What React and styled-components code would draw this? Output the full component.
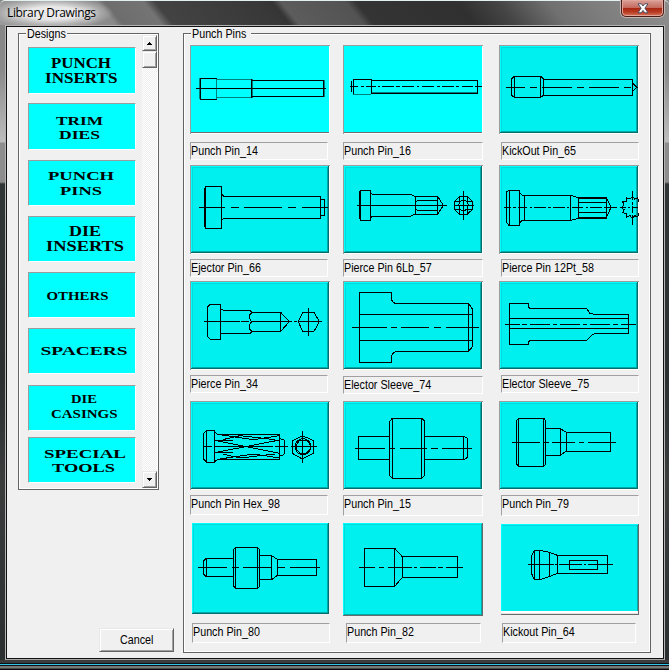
import React from "react";
import styled, { createGlobalStyle, css } from "styled-components";

const GlobalStyle = createGlobalStyle`
  * { box-sizing: border-box; }
  html, body { margin: 0; padding: 0; }
  body { width: 669px; height: 670px; overflow: hidden; background: #2b2f30; }
`;

const Window = styled.div`
  width: 669px;
  height: 670px;
  display: flex;
  flex-direction: column;
  overflow: hidden;
  font-family: "Liberation Sans", Arial, sans-serif;
  color: #000;
  background: linear-gradient(180deg, #858585 0, #8a8a8a 70px, #bdbdbd 142px, #8d8d8d 143px, #8d8d8d 182px, #303536 184px, #2b2f30 380px, #3b3d3d 480px, #2b2f30 660px);
`;

const TitleBar = styled.header`
  display: flex;
  justify-content: space-between;
  height: 25px;
  flex: none;
  border-top: 1px solid #e4efef;
  border-radius: 5px 5px 0 0;
  background:
    radial-gradient(ellipse 62px 16px at 52px 12px, rgba(235, 235, 235, 0.95) 40%, rgba(200, 200, 200, 0.55) 75%, rgba(150, 150, 150, 0) 100%),
    linear-gradient(51deg, #9a9a9a 0, #8a8a8a 90px, #6d6d6d 96px, #747474 126px, #434343 135px, #383838 215px, #353535 226px, #5c5c5c 233px, #535353 283px, #343434 291px, #303030 370px, #444 400px, #707070 440px, #7c7c7c 470px, #8b8b8b 520px);
`;

const Title = styled.h1`
  margin: 0;
  padding: 3px 0 0 7px;
  font: 400 12px/18px "Open Sans", "Noto Sans", sans-serif;
  letter-spacing: -0.36px;
  text-shadow: 0 0 6px #fff;
`;

const CloseButton = styled.button`
  width: 43px;
  height: 17px;
  margin: -1px 5px 0 0;
  padding: 0;
  display: flex;
  justify-content: center;
  align-items: center;
  border: 1px solid #4a1c18;
  border-top: 0;
  border-radius: 0 0 5px 5px;
  box-shadow: 0 0 0 1px #c4b4b0, inset 0 0 0 1px #e0a59a;
  background: linear-gradient(180deg, #d9a199 0, #c56a5d 48%, #a92712 52%, #b83a22 75%, #d8775c 100%);
`;

const Frame = styled.main`
  width: 660px;
  height: 635px;
  margin-left: 5px;
  flex: none;
  display: flex;
  background: #f0f0f0;
  border: 1px solid #b4b4b4;
  border-bottom-color: #a8a8a8;
  box-shadow: inset 0 0 0 1px #111;
`;

const BottomEdge = styled.footer`
  flex: 1;
  background: linear-gradient(180deg, #3b3b3b 0 3px, #0b1416 3px 4px, #32c4ea 4px 5px, #101010 5px 6px, #777 6px 8px, #4a4a4a 8px 9px, #080808 9px);
`;

const SideColumn = styled.div`
  width: 177px;
  padding: 7px 0 0 12px;
  display: flex;
  flex-direction: column;
`;

const Group = styled.section`
  position: relative;
  width: ${(p) => p.$w}px;
  height: ${(p) => p.$h}px;
  flex: none;
  display: flex;
  border: 1px solid #646464;
  box-shadow: inset 1px 1px 0 #fff, inset -1px -1px 0 #fff;
`;

const textFace = css`
  font-size: 12px;
  line-height: 14px;
  white-space: nowrap;
  transform: scaleX(0.895);
  transform-origin: 0 50%;
`;

/* Caption that sits on the group's top border. */
const GroupTitle = styled.div`
  position: absolute;
  left: 7px;
  top: -7px;
  width: ${(p) => p.$w}px;
  height: 14px;
  padding-left: 1px;
  background: #f0f0f0;
`;

const Face = styled.span`
  display: block;
  ${textFace}
`;

const DesignList = styled.div`
  width: 123px;
  padding: 13px 0 0 9px;
`;

const DesignButton = styled.button`
  display: block;
  width: 108px;
  height: ${(p) => p.$h}px;
  margin: 0 0 ${(p) => p.$gap}px;
  padding: 0;
  border: 1px solid;
  border-color: #9c9c9c #fff #fff #9c9c9c;
  background: #00ffff;
`;

const WordArt = styled.svg`
  display: block;
  margin: -1px;
  font-family: "Liberation Serif", "Times New Roman", serif;
  font-weight: 700;
`;

const ScrollBar = styled.div`
  width: 15px;
  margin-top: 1px;
  height: 453px;
  display: flex;
  flex-direction: column;
  background: repeating-conic-gradient(#fff 0 25%, #eee 0 50%) 0 0 / 2px 2px;
`;

const bevel = css`
  border: 1px solid;
  border-color: #e8e8e8 #646464 #646464 #e8e8e8;
  box-shadow: inset 1px 1px 0 #fff, inset -1px -1px 0 #a0a0a0;
  background: #f0f0f0;
`;

const ScrollPart = styled.button`
  ${bevel}
  display: flex;
  justify-content: center;
  align-items: center;
  flex: none;
  width: 15px;
  height: ${(p) => p.$h}px;
  margin-top: ${(p) => (p.$last ? "auto" : 0)};
  padding: 0;
`;

const CancelButton = styled.button`
  ${bevel}
  width: 75px;
  height: 24px;
  margin: 138px 0 0 81px;
  padding: 0 0 0 4px;
  display: flex;
  justify-content: center;
  align-items: center;
  color: #000;
  font-family: inherit;
`;

const PinArea = styled.div`
  padding-top: 7px;
`;

const PinColumn = styled.div`
  width: ${(p) => p.$w}px;
  padding: 11px 0 0 ${(p) => p.$left || 0}px;
`;

const shadows = {
  flat: "inset 1px 1px 0 #9c9c9c, inset -1px -1px 0 #fff, inset 0 -2px 0 #707070",
  raised:
    "inset 1px 1px 0 #9c9c9c, inset -1px -1px 0 #fff, inset -2px -2px 0 #006f6f, inset 2px 2px 0 #00ffff, inset -3px -3px 0 #00a8a8, inset 3px 3px 0 #00dcdc",
  bare:
    "inset -1px -1px 0 #006f6f, inset 1px 1px 0 #00ffff, inset -2px -2px 0 #00a8a8, inset 2px 2px 0 #00dcdc",
  framed:
    "inset -1px -1px 0 #6a6a6a, inset 1px 1px 0 #00ffff, inset -2px -2px 0 #00a8a8, inset 2px 2px 0 #00dcdc",
  lined:
    "inset -1px -1px 0 #6a6a6a, inset 0 -2px 0 #e4e4e4, inset 0 -4px 0 #fff, inset 1px 1px 0 #00ffff, inset -2px 0 0 #00a8a8, inset 0 2px 0 #00dcdc",
};

const PinPicture = styled.button`
  display: block;
  width: ${(p) => p.$w}px;
  height: ${(p) => p.$h}px;
  margin: ${(p) => p.$top}px 0 0 ${(p) => p.$left}px;
  padding: 0;
  border: 0;
  background: ${(p) => (p.$kind === "flat" ? "#00ffff" : "#00f0f0")};
  box-shadow: ${(p) => shadows[p.$kind]};
`;

const PinLabel = styled.div`
  width: ${(p) => p.$w}px;
  height: ${(p) => p.$h}px;
  margin: ${(p) => p.$top}px 0 0 ${(p) => p.$left}px;
  padding: 1px 0 0;
  border: 1px solid;
  border-color: #a0a0a0 #fff #fff #a0a0a0;
`;

const Drawing = styled.svg`
  display: block;
  fill: none;
  stroke: #000;
  stroke-width: 3;
  shape-rendering: crispEdges;
`;

/* Each line: text, left, right, baseline; in button pixels. */
const designs = [
  { h: 47, gap: 9, lines: [["PUNCH", 23, 83, 21.3], ["INSERTS", 17, 89.5, 36]] },
  { h: 47, gap: 10, size: 13, lines: [["TRIM", 28, 75, 22.3], ["DIES", 31, 72, 36]] },
  { h: 46, gap: 10, size: 13.2, lines: [["PUNCH", 20, 86, 20.3], ["PINS", 32, 74, 35.3]] },
  { h: 46, gap: 10, size: 14.2, lines: [["DIE", 41, 73, 20], ["INSERTS", 18, 96, 35.3]] },
  { h: 46, gap: 10, size: 12.6, lines: [["OTHERS", 18.5, 80.5, 28]] },
  { h: 46, gap: 11, size: 13, lines: [["SPACERS", 12.5, 99.5, 27.3]] },
  { h: 46, gap: 6, size: 13, lines: [["DIE", 43, 69, 18.3], ["CASINGS", 23, 89.5, 33.3]] },
  { h: 46, gap: 0, size: 12.6, lines: [["SPECIAL", 16, 98, 20.8], ["TOOLS", 24, 87, 34.9]] },
];

const star = (cx, cy, outer, inner, points) =>
  "M" +
  Array.from({ length: points * 2 }, (_, i) => {
    const r = i % 2 ? inner : outer;
    const a = (Math.PI * i) / points;
    return `${(cx + r * Math.cos(a)).toFixed(1)} ${(cy + r * Math.sin(a)).toFixed(1)}`;
  }).join("L") +
  "Z";

/* Drawings use three units to the pixel; "at" is the top left of the view. */
const columns = [
  {
    left: 6, w: 159,
    pins: [
      { name: "Punch Pin_14", kind: "flat", at: [30, 75], pic: [140, 89, 0, 0], label: [138, 18, 8, 0],
        soft: "M58 175V238M109 178H213M109 233H213M110 175V238M216 178V234M432 181V230",
        d: "M61 175H110M61 238H110M61 175V238M213 178V234M213 181H430V230H213M48 205H438" },
      { name: "Ejector Pin_66", kind: "raised", at: [30, 15], pic: [140, 89, 5, 0], label: [138, 18, 5, 0],
        d: "M76 79H124V205H76ZM73 84V200M125 84V200M124 97L127 105L132 109H422V175H130L124 183M422 118H434V166H422M57 142H135M153 142H177M192 142H306M324 142H348M366 142H444" },
      { name: "Pierce Pin_34", kind: "raised", at: [30, 363], pic: [140, 89, 4, 0], label: [138, 18, 5, 0],
        d: "M90 433H122V538H92L83 530V441ZM122 446L131 451H210L216 457H302V514H216L210 520H122M302 457L328 485L302 514M216 457L209 464V476L215 485L209 493V507L216 514M72 484H180M184 484H208M212 484H337M342 484H352M356 484H426M355 485L368 457H402L418 485L402 514H368ZM385 445V527" },
      { name: "Punch Pin Hex_98", kind: "raised", at: [30, 33], pic: [140, 89, 8, 0], label: [138, 20, 5, 0],
        d: "M80 121H104V217H80L71 208V130ZM80 121V217M104 126L113 133H299V208H113L104 215M104 152H160M104 188H160M104 151L299 190M104 188L299 150M113 133L220 149L299 137M113 208L220 192L299 204M128 149L180 137L285 149M128 192L180 204L285 192M299 146L314 151V190L308 196H299M299 133V208M70 169H96M104 169H280M285 169H323M367 137L401 152V190L367 207L337 190V152ZM367 123V219M333 169H411M345 170A24 24 0 1 0 393 170A24 24 0 1 0 345 170M350 163L360 150L378 150L390 163V178L378 190H360L350 178Z" },
      { name: "Punch Pin_80", kind: "bare", at: [36, 399], pic: [137, 91, 8, 2], label: [138, 20, 9, 2],
        d: "M78 506H161M161 559H78L70 552V513L78 506V559M167 472H233L238 479V590L233 595H167L161 589V479ZM167 472V595M233 472V595M239 497H275L292 508H410V556H292L275 569H239M275 497V569M292 508V556M54 532H141M156 532H177M190 532H276M292 532H315M330 532H420" },
    ],
  },
  {
    left: 0, w: 156,
    pins: [
      { name: "Punch Pin_16", kind: "flat", at: [24, 75], pic: [140, 89, 0, 0], label: [140, 18, 8, 0],
        soft: "M55 222H108M110 217H428",
        d: "M55 178H108V223M55 178V223M50 184V215M110 182H428V220H110ZM45 199H70M77 199H87M94 199H122M129 199H134M141 199H177M184 199H194M202 199H238M245 199H252M262 199H298M306 199H314M322 199H357M364 199H373M380 199H413M420 199H441" },
      { name: "Pierce Pin 6Lb_57", kind: "raised", at: [489, 15], pic: [140, 89, 5, 0], label: [140, 18, 5, 0],
        d: "M541 91H572V181H541ZM538 94V178M572 98L577 103H690L708 110M572 174L577 169H690L708 162M706 109H773V163H706M706 109V163M711 121H773M711 151H773M706 121L712 125M706 151L712 147M773 109L790 136L773 163M531 136H801M821 136H881M850 94V179M839 109H861L878 125V148L861 163H839L823 148V125ZM836 136L840 124L850 120L861 124L865 136L861 148L850 153L840 148ZM839 109V124H825M861 109V124H877M839 163V148H825M861 163V148H877" },
      { name: "Elector Sleeve_74", kind: "raised", at: [489, 363], pic: [140, 89, 4, 0], label: [140, 18, 6, 0],
        d: "M538 397H634V415Q636 430 650 430H866L877 447V560L866 574H652Q636 576 634 592V607H538ZM538 463H877M538 541H877M866 430V574M516 502H621M633 502H651M663 502H748M762 502H783M798 502H897" },
      { name: "Punch Pin_15", kind: "raised", at: [489, 33], pic: [140, 89, 7, 0], label: [140, 21, 5, 0],
        d: "M628 139H535V208H628M637 85H725L734 94V256L725 265H637L629 256V94ZM637 85V265M725 85V265M734 139H852L863 145V201L854 208H734M851 139V208M525 175H615M630 175H645M660 175H740M754 175H774M786 175H876" },
      { name: "Punch Pin_82", kind: "framed", at: [489, 399], pic: [140, 93, 7, 0], label: [135, 20, 7, 3],
        d: "M553 475H644V589H553ZM644 475L667 500H833V562H667L644 589M667 500V562M537 532H585M597 532H612M624 532H696M703 532H712M719 532H768M774 532H789M798 532H849" },
    ],
  },
  {
    left: 0, w: 150,
    pins: [
      { name: "KickOut Pin_65", kind: "raised", at: [27, 135], pic: [140, 89, 0, 0], label: [138, 18, 8, 2],
        d: "M73 229H152V292H73ZM73 229L65 236V286L73 292M152 229L160 236V286L152 292M160 238H428V286H160M428 250L441 262L428 274M48 262H105M120 262H141M156 262H246M261 262H282M297 262H387M402 262H423" },
      { name: "Pierce Pin 12Pt_58", kind: "raised", at: [237, 15], pic: [140, 89, 5, 0], label: [138, 18, 5, 2],
        d: "M267 91H299V196H267L260 188V96ZM267 91V196M299 98L307 106H452L475 113M299 188L307 181H452L475 175M313 106V181M452 106V181M475 112V175M475 112H558V175H475M475 115H558M475 172H558M475 127H558M475 157H558M558 112L573 142L558 175M252 142H273M280 142H287M294 142H322M329 142H336M343 142H378M385 142H392M399 142H434M441 142H448M455 142H490M497 142H504M511 142H546M553 142H591M600 142H618M624 142H630M635 142H654M637 93V120M637 127V135M637 139V160M637 166V194" + star(637, 142, 33, 26, 12) },
      { name: "Elector Sleeve_75", kind: "raised", at: [237, 363], pic: [140, 89, 4, 0], label: [138, 18, 5, 2],
        d: "M268 430H326V442L329 445H500L510 460L522 463H626V520H530Q515 523 510 532L500 541H330L326 545V553H268ZM268 475H626M268 505H626M255 493H300M306 493H321M330 493H390M399 493H411M420 493H480M489 493H501M510 493H570M579 493H594M603 493H648" },
      { name: "Punch Pin_79", kind: "raised", at: [237, 33], pic: [140, 89, 8, 0], label: [138, 21, 5, 2],
        d: "M295 85H372L377 92V223L372 229H295L290 222V92ZM295 85V229M371 85V229M377 115H421L432 123L439 127H572V184H439L432 188L421 196H377M421 115V196M439 127V184M276 157H360M372 157H387M397 157H465M477 157H492M504 157H588" },
      { name: "Kickout Pin_64", kind: "lined", at: [243, 402], pic: [138, 91, 8, 2], label: [134, 20, 8, 3],
        d: "M343 481H359Q390 486 412 496H563V550H412Q390 560 359 569H343L335 551V496ZM343 481V569M358 481V569M388 487V560M412 496V550M448 511H533V538H448ZM324 523H402M406 523H413M417 523H486M491 523H499M504 523H530M534 523H579" },
    ],
  },
];

function Design({ item }) {
  return (
    <DesignButton $h={item.h} $gap={item.gap}>
      <WordArt width="108" height={item.h} fontSize={item.size || 13.6}>
        {item.lines.map(([text, x1, x2, y]) => (
          <text key={text} x={x1} y={y} textLength={x2 - x1} lengthAdjust="spacingAndGlyphs">
            {text}
          </text>
        ))}
      </WordArt>
    </DesignButton>
  );
}

function Pin({ pin }) {
  const [w, h, top, left] = pin.pic;
  const [lw, lh, ltop, lleft] = pin.label;
  return (
    <>
      <PinPicture $w={w} $h={h} $top={top} $left={left} $kind={pin.kind} aria-label={pin.name}>
        <Drawing width={w} height={h} viewBox={`${pin.at[0]} ${pin.at[1]} ${w * 3} ${h * 3}`}>
          {pin.soft && <path d={pin.soft} stroke="#007f7f" />}
          <path d={pin.d} />
        </Drawing>
      </PinPicture>
      <PinLabel $w={lw} $h={lh} $top={ltop} $left={lleft}>
        <Face>{pin.name}</Face>
      </PinLabel>
    </>
  );
}

export default function App() {
  return (
    <>
      <GlobalStyle />
      <Window>
        <TitleBar>
          <Title>Library Drawings</Title>
          <CloseButton aria-label="Close">
            <svg width="12" height="11" viewBox="0 0 12 11">
              <path
                d="M1 .8H4.3L6 3L7.7 .8H11L7.9 5.2L11 9.8H7.7L6 7.4L4.3 9.8H1L4.1 5.2Z"
                fill="#fff"
                stroke="#4a4e62"
                strokeWidth="1"
              />
            </svg>
          </CloseButton>
        </TitleBar>
        <Frame>
          <SideColumn>
            <Group $w={141} $h={457}>
              <GroupTitle $w={41}>
                <Face>Designs</Face>
              </GroupTitle>
              <DesignList>
                {designs.map((item, i) => (
                  <Design key={i} item={item} />
                ))}
              </DesignList>
              <ScrollBar>
                <ScrollPart $h={16} aria-label="Scroll up">
                  <svg width="5" height="3" viewBox="0 0 5 3" shapeRendering="crispEdges">
                    <path d="M2 0H3V1H4V2H5V3H0V2H1V1H2Z" />
                  </svg>
                </ScrollPart>
                <ScrollPart $h={17} aria-label="Scroll position" />
                <ScrollPart $h={17} $last aria-label="Scroll down">
                  <svg width="5" height="3" viewBox="0 0 5 3" shapeRendering="crispEdges">
                    <path d="M0 0H5V1H4V2H3V3H2V2H1V1H0Z" />
                  </svg>
                </ScrollPart>
              </ScrollBar>
            </Group>
            <CancelButton>
              <Face>Cancel</Face>
            </CancelButton>
          </SideColumn>
          <PinArea>
            <Group $w={468} $h={620}>
              <GroupTitle $w={60}>
                <Face>Punch Pins</Face>
              </GroupTitle>
              {columns.map((col, i) => (
                <PinColumn key={i} $w={col.w} $left={col.left}>
                  {col.pins.map((pin) => (
                    <Pin key={pin.name} pin={pin} />
                  ))}
                </PinColumn>
              ))}
            </Group>
          </PinArea>
        </Frame>
        <BottomEdge />
      </Window>
    </>
  );
}
